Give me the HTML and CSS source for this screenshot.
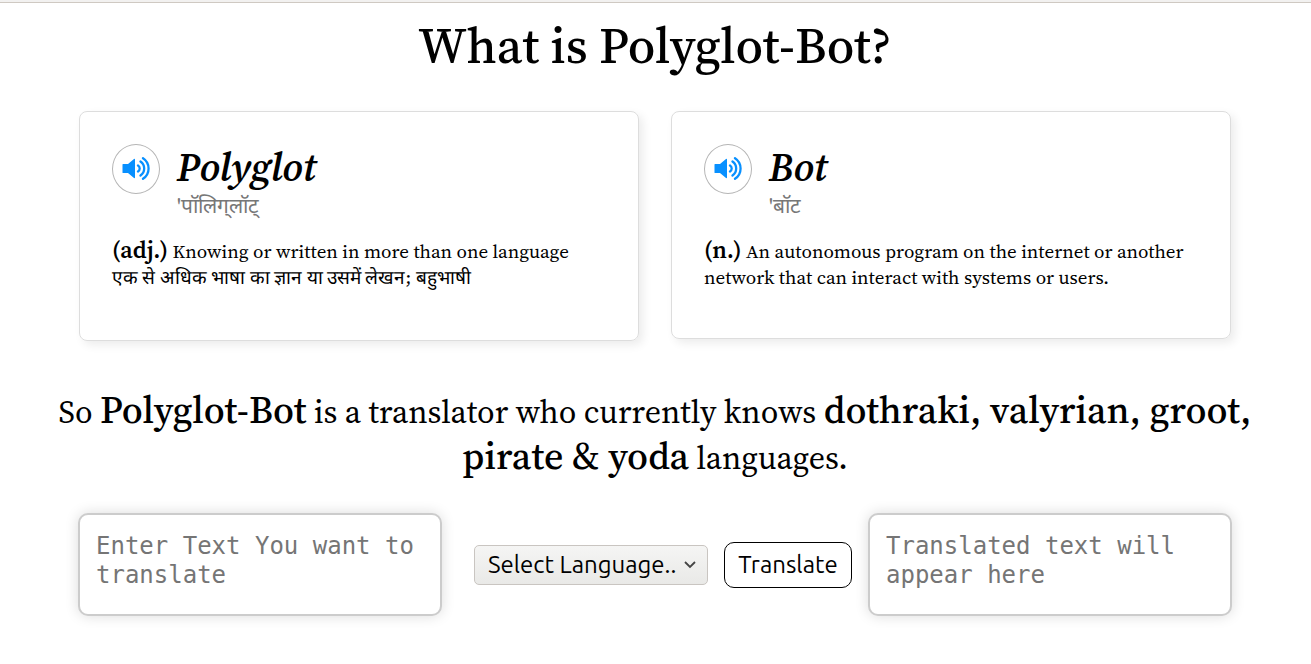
FILE: index.html
```html
<!DOCTYPE html>
<html lang="en">
<head>
<meta charset="utf-8">
<meta name="viewport" content="width=device-width, initial-scale=1">
<title>Polyglot-Bot</title>
<link rel="stylesheet" href="styles.css">
</head>
<body>
<main class="page">
  <h1 class="title">What is Polyglot-Bot?</h1>
  <section class="cards">
    <article class="card card-tall">
      <header class="card-head">
        <button class="speak" type="button" aria-label="Listen to Polyglot">
          <svg class="speak-icon" viewBox="0 0 28 24" aria-hidden="true"><path d="M1 7h5l6-5q1-.5 1 .5v18q0 1-1 .5l-6-5H1q-.5 0-.5-.5v-8Q.5 7 1 7z" fill="#0890ff"/><path d="M16 8.500a3.500 3.500 0 0 1 0 6M18.500 4.500a8.500 8.500 0 0 1 0 14M21 1.200a12.300 12.300 0 0 1 0 20.600" fill="none" stroke="#0890ff" stroke-width="2.300" stroke-linecap="round"/></svg>
        </button>
        <div>
          <h2 class="word">Polyglot</h2>
          <p class="sound">'पॉलिग्&zwnj;लॉट्</p>
        </div>
      </header>
      <p class="meaning"><b class="kind">(adj.)</b> Knowing or written in more than one language<br><span lang="hi">एक से अधिक भाषा का ज्ञान या उसमें लेखन; बहुभाषी</span></p>
    </article>
    <article class="card">
      <header class="card-head">
        <button class="speak" type="button" aria-label="Listen to Bot">
          <svg class="speak-icon" viewBox="0 0 28 24" aria-hidden="true"><path d="M1 7h5l6-5q1-.5 1 .5v18q0 1-1 .5l-6-5H1q-.5 0-.5-.5v-8Q.5 7 1 7z" fill="#0890ff"/><path d="M16 8.500a3.500 3.500 0 0 1 0 6M18.500 4.500a8.500 8.500 0 0 1 0 14M21 1.200a12.300 12.300 0 0 1 0 20.600" fill="none" stroke="#0890ff" stroke-width="2.300" stroke-linecap="round"/></svg>
        </button>
        <div>
          <h2 class="word">Bot</h2>
          <p class="sound">'बॉट</p>
        </div>
      </header>
      <p class="meaning"><b class="kind">(n.)</b> An autonomous program on the internet or another network that can interact with systems or users.</p>
    </article>
  </section>
  <p class="summary">So <b class="strong">Polyglot-Bot</b> is a translator who currently knows <b class="strong">dothraki, valyrian, groot, pirate &amp; yoda</b> languages.</p>
  <form class="translator">
    <textarea class="box" aria-label="Text to translate" placeholder="Enter Text You want to translate"></textarea>
    <div class="controls">
      <span class="select-wrap">
        <select class="language" aria-label="Language"><option>Select Language..</option><option>Dothraki</option><option>Valyrian</option><option>Groot</option><option>Pirate</option><option>Yoda</option></select>
        <svg class="chevron" viewBox="0 0 12 8" aria-hidden="true"><path d="M1 1l5 5 5-5" fill="none" stroke="#444" stroke-width="1.800"/></svg>
      </span>
      <button class="translate" type="button">Translate</button>
    </div>
    <textarea class="box" aria-label="Translated text" placeholder="Translated text will appear here" readonly></textarea>
  </form>
</main>
</body>
</html>
```

FILE: styles.css
```css
* { box-sizing: border-box; }
body { margin: 0; border-top: 2px solid #f2f1f0; background: #fff; color: #000; font-family: "Source Serif Pro", "Source Serif 4", "Noto Serif CJK SC", "Noto Serif", "Liberation Serif", serif; }
.page { border-top: 1px solid #cfc9c2; padding: 13px 40px 32px 39px; }
.title { margin: 0; font-size: 50px; line-height: 60px; font-weight: 550; text-align: center; }
.cards { display: grid; grid-template-columns: 1fr 1fr; gap: 32px; align-items: start; padding: 0 40px; margin-top: 35px; }
.card { min-height: 228px; padding: 32px; border: 1px solid #ddd; border-radius: 8px; box-shadow: 4px 4px 10px rgba(0, 0, 0, .08); }
.card-tall { min-height: 230px; }
.card-head { display: flex; gap: 17px; }
.speak { display: grid; place-items: center; width: 48px; height: 50px; padding: 0; border: 1px solid #b5b5b5; border-radius: 50%; background: #fff; }
.speak-icon { width: 28px; height: 24px; }
.word { margin: 0; font-size: 40px; line-height: 46px; font-style: italic; font-weight: 600; }
.sound { margin: 3px 0 0; font-size: 21px; line-height: 26px; color: #777; }
.meaning { margin: 18px 0 0; font-size: 19px; line-height: 26px; }
.kind { font-size: 24px; font-weight: 600; }
.summary { margin: 48px 0 0; font-size: 32px; line-height: 46px; text-align: center; }
.strong { font-size: 38px; line-height: 40px; font-weight: 550; }
.translator { display: flex; align-items: center; gap: 16px; padding: 0 39px; margin-top: 32px; }
.box { flex: 1; min-width: 0; height: 103px; padding: 17px 16px; resize: none; border: 2px solid #ccc; border-radius: 10px; box-shadow: 0 0 14px rgba(0, 0, 0, .14); font: 24px/29px "DejaVu Sans Mono", monospace; }
.box::placeholder { color: #757575; opacity: 1; }
.controls { display: flex; align-items: center; gap: 16px; margin-left: 16px; }
.select-wrap { display: grid; align-items: center; justify-items: end; }
.language { grid-area: 1 / 1; appearance: none; width: 234px; height: 40px; padding: 0 13px; border: 1px solid #c9c5c1; border-radius: 5px; background: linear-gradient(#f5f5f4, #e9e9e7); color: #000; font: 24px "Ubuntu", "Noto Sans", sans-serif; }
.chevron { grid-area: 1 / 1; width: 12px; height: 8px; margin-right: 12px; pointer-events: none; }
.translate { width: 128px; height: 46px; padding: 0; border: 1px solid #000; border-radius: 10px; background: #fff; color: #000; font: 24px "Ubuntu", "Noto Sans", sans-serif; }
```
